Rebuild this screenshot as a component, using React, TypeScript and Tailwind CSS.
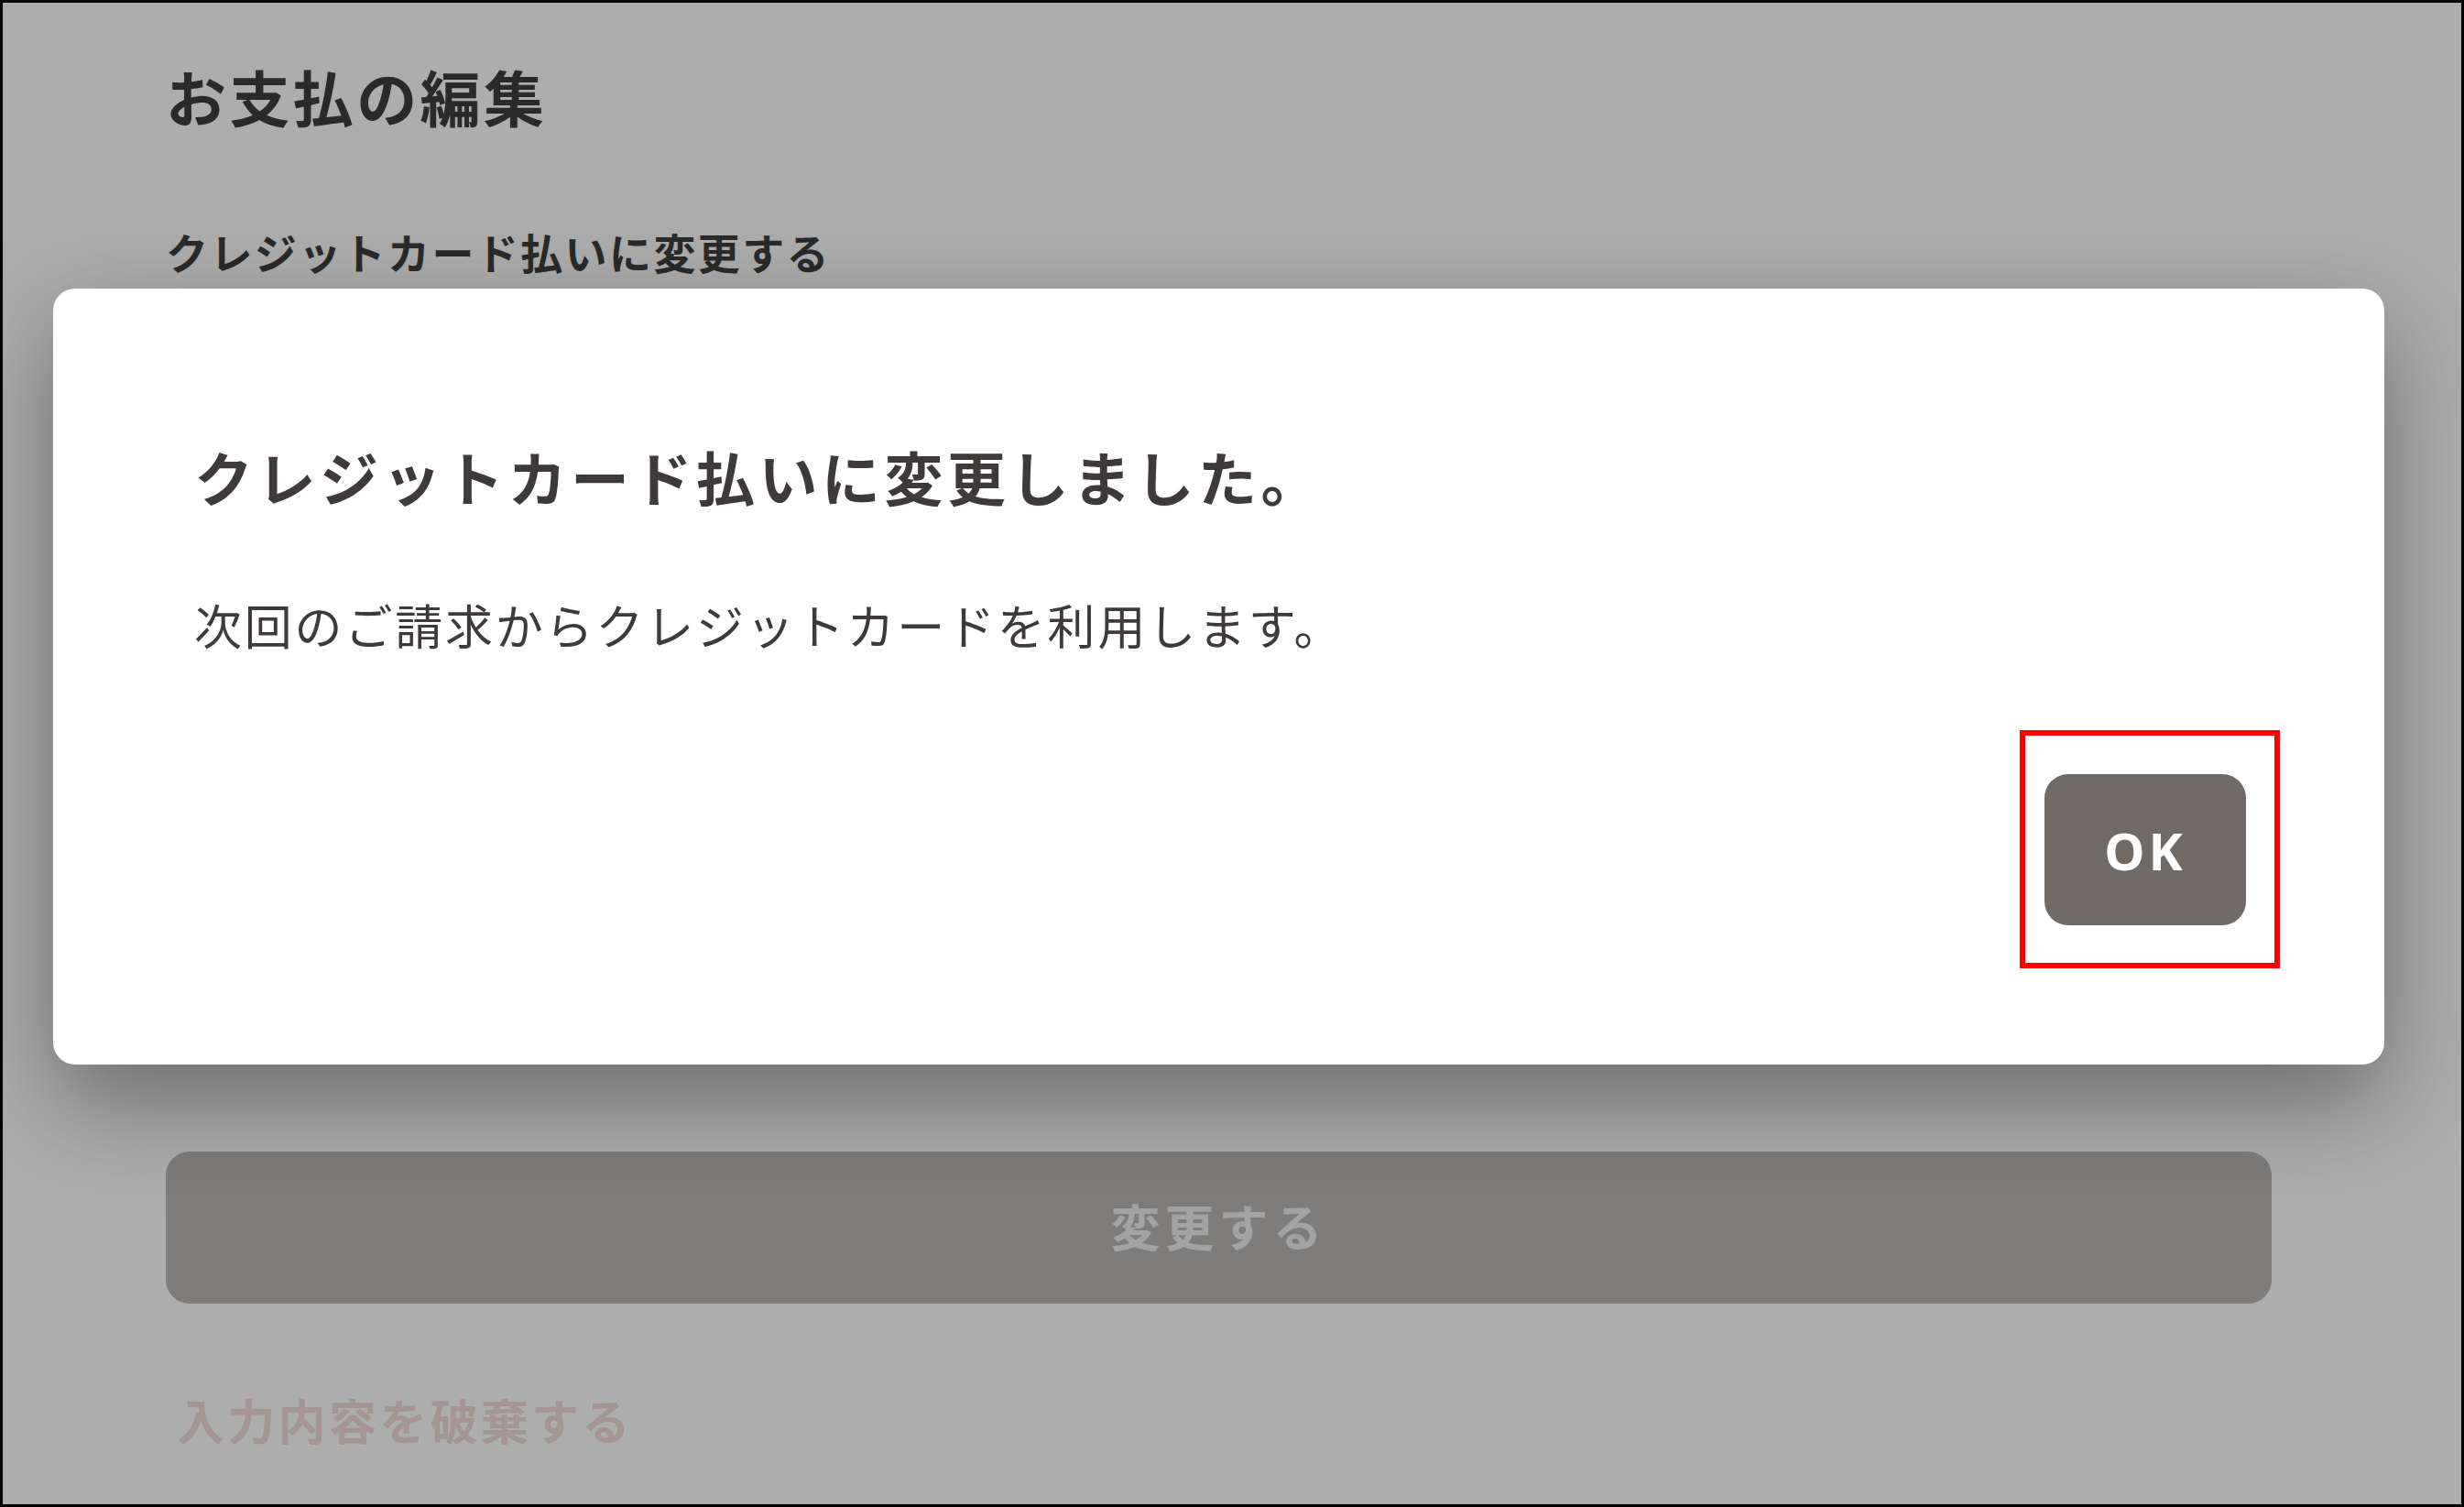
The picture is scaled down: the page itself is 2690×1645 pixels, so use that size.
import React from 'react';

const font = { fontFamily: '"Noto Sans", "Noto Sans CJK JP", sans-serif' };

const App = () => {
  return (
    <div
      className="relative w-[2690px] h-[1645px] overflow-hidden border-[3px] border-black bg-white"
      style={font}
    >
      {/* page behind the dialog */}
      <div className="flex flex-col pl-[178px] pr-[207px] pt-[71px]">
        <h1 className="text-[66px] leading-none font-bold tracking-[3.4px] text-[#3e3e3e]">お支払の編集</h1>
        <h2 className="mt-[113px] text-[46px] leading-none font-bold tracking-[2.4px] text-[#3e3e3e]">
          クレジットカード払いに変更する
        </h2>
        <div className="h-[958px]" />
        <button className="h-[166px] w-full rounded-[26px] bg-[#bbb9b6] text-[54px] font-bold tracking-[5px] text-[#f0f0f0]">
          変更する
        </button>
        <a className="mt-[103px] pl-[12px] text-[52px] leading-none font-bold tracking-[3.3px] text-[#f3dada]">
          入力内容を破棄する
        </a>
      </div>

      {/* overlay */}
      <div className="absolute inset-0 bg-black/[0.32]" />

      {/* dialog */}
      <div className="absolute left-[55px] top-[312px] flex h-[847px] w-[2545px] flex-col rounded-[24px] bg-white pl-[154px] pr-[151px] pt-[176px] shadow-[0_40px_110px_rgba(0,0,0,0.38)]">
        <p className="text-[64px] leading-none font-bold tracking-[4.5px] text-[#3e3a39]">
          クレジットカード払いに変更しました。
        </p>
        <p className="mt-[103px] text-[52px] leading-none tracking-[2.8px] text-[#3e3a39]">
          次回のご請求からクレジットカードを利用します。
        </p>
        <div className="relative mt-[135px] self-end">
          <button className="flex h-[165px] w-[220px] items-center justify-center rounded-[26px] bg-[#6f6a66] text-[56px] font-bold tracking-[4px] text-white">
            OK
          </button>
          <div className="pointer-events-none absolute -left-[27px] -right-[37px] -top-[48px] -bottom-[47px] border-[6px] border-[#ff0000]" />
        </div>
      </div>
    </div>
  );
};

export default App;
